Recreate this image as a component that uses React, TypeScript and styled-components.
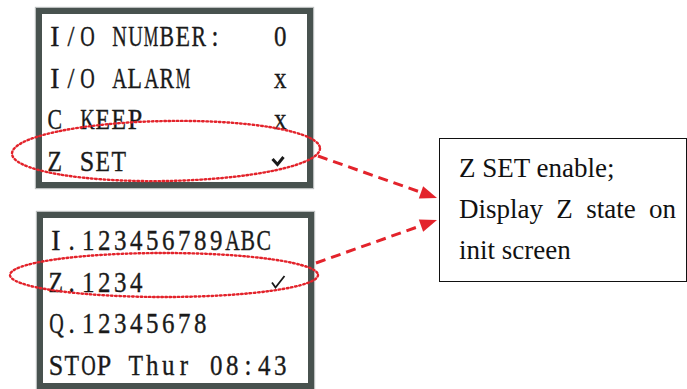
import React from 'react';
import styled, { createGlobalStyle } from 'styled-components';

const GlobalStyle = createGlobalStyle`
  html, body {
    margin: 0;
    padding: 0;
    background: #ffffff;
    overflow: hidden;
  }
`;

const Page = styled.div`
  position: relative;
  width: 687px;
  height: 389px;
  display: flex;
  align-items: flex-start;
  background: #ffffff;
  overflow: hidden;
`;

const LcdColumn = styled.div`
  display: flex;
  flex-direction: column;
  gap: 24px;
  padding: 8px 0 0 36px;
`;

const Lcd = styled.div<{ $height: number; $offset?: number }>`
  box-sizing: border-box;
  width: 277px;
  height: ${({ $height }) => $height}px;
  margin-left: ${({ $offset = 0 }) => $offset}px;
  border: 6px solid #48524f;
  box-shadow: 0 0 1px 1px rgba(60, 70, 68, 0.35);
  background: #ffffff;
  padding: 2px 19px 0 5px;
  display: flex;
  flex-direction: column;
`;

const FONT_SIZE = 29;
const CELL = 16;

const Row = styled.div`
  height: 41.5px;
  line-height: 41.5px;
  display: flex;
  justify-content: space-between;
  align-items: center;
  font-family: 'Liberation Serif', 'Times New Roman', serif;
  font-size: ${FONT_SIZE}px;
  color: #1a1a1a;
  -webkit-text-stroke: 0.35px #1a1a1a;
`;

const Label = styled.span`
  display: flex;
`;

// one character cell of the LCD grid
const Cell = styled.span`
  display: inline-flex;
  justify-content: center;
  width: ${CELL}px;
  white-space: pre;
`;

const Glyph = styled.span`
  display: inline-block;
  flex-shrink: 0;
`;

const Value = styled.span<{ $shift?: number }>`
  width: ${CELL}px;
  display: inline-flex;
  justify-content: center;
  margin-right: ${({ $shift = 0 }) => $shift}px;
`;

const CheckIcon = styled.svg`
  display: block;
`;

const NoteBox = styled.div`
  box-sizing: border-box;
  width: 251px;
  height: 144px;
  margin: 138px 0 0 125px;
  border: 1px solid #111111;
  padding: 9px 10px 0 19px;
  font-family: 'Liberation Serif', 'Times New Roman', serif;
  font-size: 27px;
  line-height: 41px;
  color: #111111;
  text-align: justify;
`;

const Overlay = styled.svg`
  position: absolute;
  left: 0;
  top: 0;
  pointer-events: none;
`;

// Times-metric advance widths of the capitals, used to squeeze them into a cell
const capWidth: Record<string, number> = {
  A: 0.722, B: 0.667, C: 0.667, D: 0.722, E: 0.611, H: 0.722, I: 0.333, K: 0.722,
  L: 0.611, M: 0.889, N: 0.722, O: 0.722, P: 0.556, Q: 0.722, R: 0.667, S: 0.556,
  T: 0.611, U: 0.722, X: 0.722, Z: 0.611,
};

const glyphScale = (ch: string) => {
  const w = capWidth[ch];
  if (!w) return 0.86;
  return Math.min(0.95, 14.5 / (w * FONT_SIZE));
};

const BoldCheck = () => (
  <CheckIcon width="14" height="12" viewBox="0 0 14 12">
    <polyline points="1.5,4 6.5,9.5 12.5,2" fill="none" stroke="#1a1a1a" strokeWidth="3" />
  </CheckIcon>
);

const ThinCheck = () => (
  <CheckIcon width="16" height="14" viewBox="0 0 16 14">
    <polyline points="2,7.5 5.5,12.5 14.5,1" fill="none" stroke="#1a1a1a" strokeWidth="1.8" />
  </CheckIcon>
);

const Chars = ({ text }: { text: string }) => (
  <Label>
    {text.split('').map((ch, i) => (
      <Cell key={i}>
        <Glyph style={{ transform: `scaleX(${glyphScale(ch)})` }}>{ch}</Glyph>
      </Cell>
    ))}
  </Label>
);

type Line = { label: string; value?: React.ReactNode; shift?: number };

const settings: Line[] = [
  { label: 'I/O NUMBER:', value: <Chars text="0" /> },
  { label: 'I/O ALARM', value: <Chars text="x" /> },
  { label: 'C KEEP', value: <Chars text="x" /> },
  { label: 'Z SET', value: <BoldCheck />, shift: 2 },
];

const status: Line[] = [
  { label: 'I.123456789ABC' },
  { label: 'Z.1234', value: <ThinCheck />, shift: 3 },
  { label: 'Q.12345678' },
  { label: 'STOP Thur 08:43' },
];

const red = '#e3232b';

const Arrow = ({ x1, y1, x2, y2 }: { x1: number; y1: number; x2: number; y2: number }) => {
  const a = Math.atan2(y2 - y1, x2 - x1);
  const len = 17;
  const half = 6.5;
  const bx = x2 - len * Math.cos(a);
  const by = y2 - len * Math.sin(a);
  const px = -Math.sin(a) * half;
  const py = Math.cos(a) * half;
  return (
    <g>
      <line x1={x1} y1={y1} x2={bx} y2={by} stroke={red} strokeWidth="3" strokeDasharray="10 6" />
      <polygon points={`${x2},${y2} ${bx + px},${by + py} ${bx - px},${by - py}`} fill={red} />
    </g>
  );
};

const Screen = ({ lines, height, offset }: { lines: Line[]; height: number; offset?: number }) => (
  <Lcd $height={height} $offset={offset}>
    {lines.map((l) => (
      <Row key={l.label}>
        <Chars text={l.label} />
        {l.value && <Value $shift={l.shift}>{l.value}</Value>}
      </Row>
    ))}
  </Lcd>
);

export default function App() {
  return (
    <Page>
      <GlobalStyle />
      <LcdColumn>
        <Screen lines={settings} height={180} />
        <Screen lines={status} height={177} offset={1} />
      </LcdColumn>
      <NoteBox>
        Z SET enable;
        <br />
        Display Z state on init screen
      </NoteBox>
      <Overlay width="687" height="389" viewBox="0 0 687 389">
        <ellipse cx="166" cy="151" rx="154" ry="30" fill="none" stroke={red} strokeWidth="2.4" strokeDasharray="1.6 2.6" strokeLinecap="round" transform="rotate(-1 166 151)" />
        <ellipse cx="164" cy="275" rx="154" ry="22" fill="none" stroke={red} strokeWidth="2.4" strokeDasharray="1.6 2.6" strokeLinecap="round" />
        <Arrow x1={318} y1={156} x2={437} y2={198} />
        <Arrow x1={316} y1={263} x2={437} y2={220} />
      </Overlay>
    </Page>
  );
}
